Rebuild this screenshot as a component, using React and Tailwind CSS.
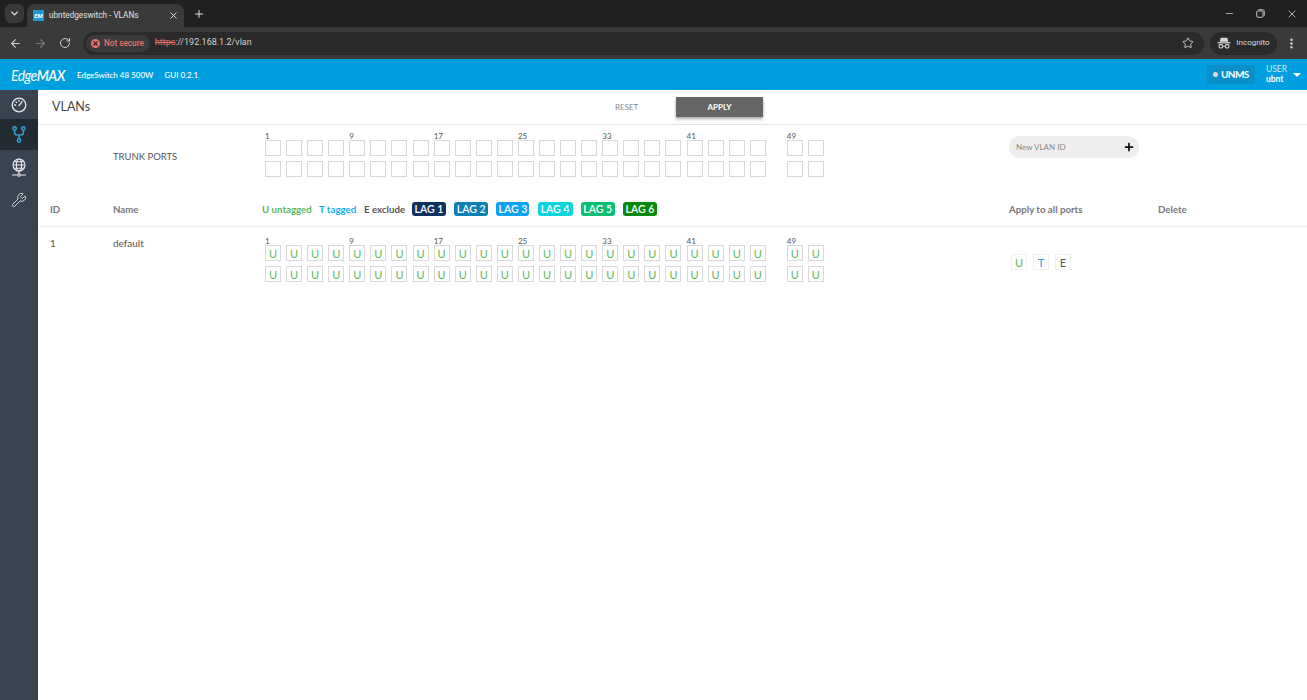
import { ArrowLeft, ArrowRight, ChevronDown, EllipsisVertical, Minus, Plus, RotateCw, Star, Wrench, X } from 'lucide-react'

const CHROME_FONT = "font-['Roboto',sans-serif]"

const PORT_GROUPS = [
  { from: 1, count: 24 },
  { from: 49, count: 2 },
]

const LAGS = [
  { name: 'LAG 1', w: 'w-[34px]', bg: 'bg-[#10305f]' },
  { name: 'LAG 2', w: 'w-[34px]', bg: 'bg-[#0b80b5]' },
  { name: 'LAG 3', w: 'w-[33px]', bg: 'bg-[#0ba3f2]' },
  { name: 'LAG 4', w: 'w-[35px]', bg: 'bg-[#0bd5dc]' },
  { name: 'LAG 5', w: 'w-[34px]', bg: 'bg-[#0abf72]' },
  { name: 'LAG 6', w: 'w-[34px]', bg: 'bg-[#078a0c]' },
]

function PortBox({ value }) {
  return (
    <div className="w-4 h-4 shrink-0 border border-[#d8d8d8] flex items-center justify-center text-[11px] leading-none text-[#5cb85c]">
      {value}
    </div>
  )
}

function PortRow({ value, from, count }) {
  return (
    <div className="flex gap-[5.08px]">
      {Array.from({ length: count }, (_, i) => (
        <PortBox key={from + i} value={value} />
      ))}
    </div>
  )
}

function PortGrid({ value }) {
  return (
    <div className="flex gap-[21px]">
      {PORT_GROUPS.map((g) => (
        <div key={g.from}>
          <div className="relative h-[10px]">
            {/* the numbers run by two columns: top row odd, bottom row even */}
            {Array.from({ length: g.count }, (_, i) => i)
              .filter((i) => i % 4 === 0)
              .map((i) => (
                <span
                  key={i}
                  className="absolute top-[1px] text-[8px] leading-[10px] text-[#555555]"
                  style={{ left: i * 21.08 }}
                >
                  {g.from + i * 2}
                </span>
              ))}
          </div>
          <div className="flex flex-col gap-[5px]">
            <PortRow value={value} from={g.from} count={g.count} />
            <PortRow value={value} from={g.from} count={g.count} />
          </div>
        </div>
      ))}
    </div>
  )
}

function GaugeIcon() {
  return (
    <svg width="16" height="16" viewBox="0 0 16 16" fill="none" stroke="#e6e8ea" strokeWidth="1.3" strokeLinecap="round">
      <circle cx="8" cy="8" r="6.8" />
      <path d="M8 8.6 11 4.6" />
      <path d="M3.6 8h1M8 3.2v1M4.9 4.9l.7.7" />
    </svg>
  )
}

function BranchIcon() {
  return (
    <svg width="14" height="17" viewBox="0 0 14 17" fill="none" stroke="#35a9dc" strokeWidth="1.4">
      <circle cx="2.6" cy="2.4" r="1.7" />
      <circle cx="11.4" cy="2.4" r="1.7" />
      <circle cx="7" cy="14.4" r="1.7" />
      <path d="M2.6 4.1v2.4c0 1.6 1 2.4 2.4 2.4h4c1.4 0 2.4-.8 2.4-2.4V4.1M7 9v3.7" />
    </svg>
  )
}

function GlobeIcon() {
  return (
    <svg width="16" height="19" viewBox="0 0 16 19" fill="none" stroke="#e6e8ea" strokeWidth="1.1">
      <circle cx="8" cy="7" r="6" />
      <ellipse cx="8" cy="7" rx="2.6" ry="6" />
      <path d="M2 7h12M3 3.8h10M3 10.2h10M8 13v3" />
      <path d="M1 17h5.4M9.6 17H15" />
      <circle cx="8" cy="17" r="1.3" />
    </svg>
  )
}

function IncognitoIcon() {
  return (
    <svg width="14" height="12" viewBox="0 0 16 14" fill="#d6d6d6">
      <path d="M4.2 1h7.6l1.2 4.6H3z" />
      <rect x="0.5" y="6" width="15" height="1.4" />
      <circle cx="4.3" cy="10.8" r="2.2" fill="none" stroke="#d6d6d6" strokeWidth="1.3" />
      <circle cx="11.7" cy="10.8" r="2.2" fill="none" stroke="#d6d6d6" strokeWidth="1.3" />
      <rect x="6.4" y="10.2" width="3.2" height="1.2" />
    </svg>
  )
}

function RestoreIcon() {
  return (
    <svg width="9" height="9" viewBox="0 0 10 10" fill="none" stroke="#d8d8d8" strokeWidth="1">
      <rect x="0.8" y="2.2" width="7" height="7" rx="1.2" />
      <path d="M2.6 0.8h4.6c1.2 0 2 .8 2 2v4.6" />
    </svg>
  )
}

function TitleBar() {
  return (
    <div className={`h-[27px] bg-[#1f2021] flex items-stretch text-[#e3e3e3] ${CHROME_FONT}`}>
      <div className="w-[24px] flex items-center justify-end">
        <div className="w-[19px] h-[19px] rounded-md bg-[#38393a] flex items-center justify-center">
          <ChevronDown size={11} strokeWidth={3} />
        </div>
      </div>
      <div className="ml-[3px] mt-1 w-[157px] bg-[#3a3a3a] rounded-t-lg flex items-center pl-[6px] pr-[5px]">
        <div className="w-[11px] h-[11px] bg-[#1b9ad6] text-[6px] leading-[11px] text-center font-bold italic text-white">EM</div>
        <span className="ml-[5px] text-[8.2px] flex-1 whitespace-nowrap">ubntedgeswitch - VLANs</span>
        <X size={11} strokeWidth={2} />
      </div>
      <div className="ml-[9px] flex items-center">
        <Plus size={12} strokeWidth={2} />
      </div>
      <div className="flex-1" />
      <div className="flex items-center pr-[9px]">
        <Minus size={11} strokeWidth={1.5} className="text-[#d8d8d8]" />
        <div className="ml-[21px]"><RestoreIcon /></div>
        <X size={12} strokeWidth={1.5} className="ml-[21px] text-[#d8d8d8]" />
      </div>
    </div>
  )
}

function AddressBar() {
  return (
    <div className={`h-8 bg-[#3a3a3a] flex items-center ${CHROME_FONT}`}>
      <ArrowLeft size={13} strokeWidth={2} className="ml-[9px] text-[#cfcfcf]" />
      <ArrowRight size={13} strokeWidth={2} className="ml-3 text-[#7a7a7a]" />
      <RotateCw size={12} strokeWidth={2} className="ml-3 text-[#cfcfcf]" />
      <div className="ml-[12px] w-[1121px] h-[23px] rounded-full bg-[#2a2a2a] flex items-center pl-[3px]">
        <div className="h-[17px] pl-[5px] pr-[6px] rounded-full bg-[#3a3a3a] flex items-center gap-[4px]">
          <span className="w-[9px] h-[9px] rounded-full bg-[#e57368] flex items-center justify-center">
            <X size={7} strokeWidth={4} className="text-[#2a2a2a]" />
          </span>
          <span className="text-[8.2px] leading-[17px] font-medium text-[#e57368] whitespace-nowrap">Not secure</span>
        </div>
        <span className="ml-[5px] text-[9px] text-[#d0d0d0] whitespace-nowrap">
          <span className="text-[#e57368] line-through">https</span>://192.168.1.2/vlan
        </span>
        <div className="flex-1" />
        <Star size={12} strokeWidth={1.8} className="mr-[10px] text-[#d8d8d8]" />
      </div>
      <div className="ml-[6px] w-[67px] h-[23px] rounded-full bg-[#2a2a2a] flex items-center justify-center gap-[5px]">
        <IncognitoIcon />
        <span className="text-[8px] text-[#d8d8d8]">Incognito</span>
      </div>
      <EllipsisVertical size={13} strokeWidth={2.4} className="ml-[8px] text-[#d8d8d8]" />
    </div>
  )
}

function AppHeader() {
  return (
    <header className="h-[31px] bg-[#009fdf] flex items-center text-white">
      <span className="ml-[11px] w-[55px] text-[16px] italic tracking-[-0.6px] whitespace-nowrap origin-left scale-x-[0.87]">
        <span className="font-normal">Edge</span><span className="font-semibold">MAX</span>
      </span>
      <span className="ml-[11px] text-[8px] font-medium whitespace-nowrap">EdgeSwitch 48 500W</span>
      <span className="ml-[11px] text-[8px] font-medium whitespace-nowrap">GUI 0.2.1</span>
      <div className="flex-1" />
      <div className="w-[48px] h-[19px] bg-[#0b8fcb] flex items-center pl-[6px] gap-[3px]">
        <span className="w-[5px] h-[5px] rounded-full bg-[#d8dde0]" />
        <span className="text-[10px] font-bold tracking-[-0.6px]">UNMS</span>
      </div>
      <div className="ml-[11px] w-[24px] text-[8.5px] leading-[9.5px]">
        <div className="text-[#cfeaf8]">USER</div>
        <div className="font-bold">ubnt</div>
      </div>
      <div className="ml-[3px] mr-[6px] w-0 h-0 border-x-[4px] border-x-transparent border-t-[4px] border-t-white" />
    </header>
  )
}

function Sidebar() {
  return (
    <aside className="w-[38px] shrink-0 bg-[#3a4450] flex flex-col">
      <div className="h-[29px] flex items-center justify-center"><GaugeIcon /></div>
      <div className="h-[31px] bg-[#232a32] flex items-center justify-center"><BranchIcon /></div>
      <div className="h-[34px] flex items-center justify-center"><GlobeIcon /></div>
      <div className="h-[32px] flex items-center justify-center">
        <Wrench size={16} strokeWidth={1.3} className="text-[#e6e8ea]" />
      </div>
    </aside>
  )
}

function Legend() {
  return (
    <div className="flex items-center text-[9.7px] font-bold whitespace-nowrap">
      <span className="w-[57px] text-[#5cb85c]">U untagged</span>
      <span className="w-[45px] text-[#19a9f0]">T tagged</span>
      <span className="w-[48px] text-[#555555]">E exclude</span>
      <div className="flex gap-[8.2px]">
        {LAGS.map((l) => (
          <span key={l.name} className={`${l.w} h-[14px] rounded-[3px] ${l.bg} text-white text-center text-[10.5px] leading-[14px] font-semibold`}>
            {l.name}
          </span>
        ))}
      </div>
    </div>
  )
}

const ROW_COLS = 'grid grid-cols-[63px_152px_744px_149px_1fr] pl-3'

export default function App() {
  return (
    <div className="w-[1307px] h-[700px] overflow-hidden flex flex-col bg-white font-['Lato',sans-serif]">
      <TitleBar />
      <AddressBar />
      <AppHeader />
      <div className="flex-1 flex min-h-0">
        <Sidebar />
        <main className="flex-1 min-w-0">
          <div className="h-[35px] border-b border-[#e6e6e6] flex items-center relative">
            <h1 className="ml-[14px] text-[12.5px] text-[#444444]">VLANs</h1>
            <button className="absolute left-[577px] top-[12px] text-[8px] leading-[10px] text-[#888888]">RESET</button>
            <button className="absolute left-[638px] top-[7px] w-[87px] h-[20px] bg-[#666666] text-white text-[8px] font-bold shadow-[0_2px_3px_rgba(0,0,0,0.35)]">APPLY</button>
          </div>

          {/* trunk row */}
          <div className={`${ROW_COLS} h-[54px] pt-[5px]`}>
            <div />
            <div className="text-[9.5px] text-[#555555] mt-[19px] leading-[16px]">TRUNK PORTS</div>
            <PortGrid />
            <div className="mt-[6px]">
              <div className="w-[130px] h-[22px] rounded-full bg-[#eeeeee] flex items-center pl-[7px] pr-[4px]">
                <span className="text-[8px] text-[#888888] flex-1">New VLAN ID</span>
                <Plus size={12} strokeWidth={3.5} className="text-[#111111]" />
              </div>
            </div>
          </div>

          {/* header row */}
          <div className={`${ROW_COLS} h-[48px] border-b border-[#eeeeee] items-center text-[9.7px] font-bold text-[#777777] pt-[17px] pb-[3px]`}>
            <div>ID</div>
            <div>Name</div>
            <div className="-ml-[3px]"><Legend /></div>
            <div>Apply to all ports</div>
            <div>Delete</div>
          </div>

          {/* vlan row */}
          <div className={`${ROW_COLS} pt-[8px] text-[10px] text-[#555555]`}>
            <div className="mt-[2px] leading-[12px]">1</div>
            <div className="mt-[2px] leading-[12px]">default</div>
            <PortGrid value="U" />
            <div className="mt-[19px] ml-[2px] flex gap-[6px]">
              <div className="w-4 h-4 border border-[#f0f0f0] flex items-center justify-center text-[11px] leading-none text-[#5cb85c]">U</div>
              <div className="w-4 h-4 border border-[#f0f0f0] flex items-center justify-center text-[11px] leading-none text-[#19a9f0]">T</div>
              <div className="w-4 h-4 border border-[#f0f0f0] flex items-center justify-center text-[11px] leading-none text-[#555555]">E</div>
            </div>
          </div>
        </main>
      </div>
    </div>
  )
}
